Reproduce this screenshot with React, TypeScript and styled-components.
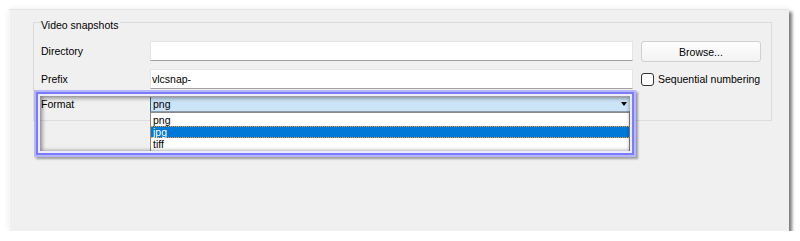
import styled, { createGlobalStyle } from 'styled-components';

const GlobalStyle = createGlobalStyle`
  body {
    margin: 0;
    background: #ffffff;
    font-family: "Liberation Sans", Arial, sans-serif;
    font-size: 10.5px;
    color: #000;
  }
`;

const Page = styled.div`
  padding: 9px 0 0 9px;
`;

const Panel = styled.div`
  position: relative;
  box-sizing: border-box;
  width: 780px;
  height: 222px;
  padding: 4px 0 0 24px;
  background: #f0f0f0;
  box-shadow: inset 0 1px 0 #e6e6e6, inset 1px 0 0 #fafafa,
    3px 3px 3px rgba(0, 0, 0, 0.5), 0 0 6px rgba(0, 0, 0, 0.08);
`;

const GroupBox = styled.fieldset`
  box-sizing: border-box;
  width: 739px;
  min-width: 0;
  margin: 0;
  padding: 10px 10px 8px 7px;
  border: 1px solid #dcdcdc;
`;

const Title = styled.legend`
  padding: 6px 2px 0 0;
  line-height: 12px;
  background: #f0f0f0;
`;

const Form = styled.div`
  display: grid;
  grid-template-columns: 101px 483px 120px;
  grid-template-rows: 20px 20px 15px;
  column-gap: 8px;
  row-gap: 8px;
`;

const Label = styled.div<{ $compact?: boolean }>`
  line-height: ${(p) => (p.$compact ? '14px' : '20px')};
`;

const TextField = styled.div`
  box-sizing: border-box;
  height: 20px;
  padding-left: 1px;
  line-height: 18px;
  background: #fff;
  border: 1px solid #e4e4e4;
  border-bottom-color: #a2a2a2;
`;

const Button = styled.button`
  box-sizing: border-box;
  height: 21px;
  padding: 0;
  font: inherit;
  color: #000;
  background: linear-gradient(#fdfdfd, #f3f3f3);
  border: 1px solid #d0d0d0;
  border-radius: 3px;
`;

const CheckRow = styled.label`
  display: flex;
  align-items: center;
  gap: 4px;
  line-height: 20px;
  white-space: nowrap;
`;

const Box = styled.span`
  box-sizing: border-box;
  width: 13px;
  height: 13px;
  background: #fff;
  border: 1px solid #333;
  border-radius: 3px;
`;

const Combo = styled.div`
  position: relative;
  box-sizing: border-box;
  width: 480px;
  height: 15px;
  padding-left: 2px;
  line-height: 14px;
  background: #cce4f7;
  border-left: 1px solid #2f6aa3;
  border-bottom: 1px solid #8a9aa8;
`;

const Arrow = styled.span`
  position: absolute;
  right: 3px;
  top: 5px;
  border-left: 3px solid transparent;
  border-right: 3px solid transparent;
  border-top: 4px solid #000;
`;

const Popup = styled.ul`
  position: absolute;
  top: 15px;
  left: -1px;
  z-index: 2;
  box-sizing: border-box;
  width: 480px;
  height: 42px;
  margin: 0;
  padding: 1px 0 0;
  list-style: none;
  background: #fff;
  border: 1px solid #8a8a8a;
`;

const Option = styled.li<{ $selected?: boolean }>`
  box-sizing: border-box;
  height: 12px;
  padding-left: 2px;
  line-height: 11px;
  background: ${(p) => (p.$selected ? '#0078d7' : 'transparent')};
  color: ${(p) => (p.$selected ? '#fff' : '#000')};
  border-top: 1px dotted ${(p) => (p.$selected ? '#f29a2e' : 'transparent')};
  border-bottom: 1px dotted ${(p) => (p.$selected ? '#f29a2e' : 'transparent')};
`;

const Highlight = styled.div`
  position: absolute;
  left: 25px;
  top: 81px;
  z-index: 3;
  box-sizing: border-box;
  width: 602px;
  height: 67px;
  pointer-events: none;
  border: 2px solid #b6b6fb;
  box-shadow: 2px 2px 2px rgba(0, 0, 0, 0.35), inset 0 0 0 2px #7b7bff,
    inset 0 0 0 4px #ececff, inset 1px 1px 4px 5px rgba(0, 0, 0, 0.45);
`;

const formats = ['png', 'jpg', 'tiff'];

export default function App() {
  return (
    <>
      <GlobalStyle />
      <Page>
        <Panel>
          <GroupBox>
            <Title>Video snapshots</Title>
            <Form>
              <Label>Directory</Label>
              <TextField />
              <Button>Browse...</Button>

              <Label>Prefix</Label>
              <TextField>vlcsnap-</TextField>
              <CheckRow>
                <Box />
                Sequential numbering
              </CheckRow>

              <Label $compact>Format</Label>
              <Combo>
                png
                <Arrow />
                <Popup>
                  {formats.map((f) => (
                    <Option key={f} $selected={f === 'jpg'}>
                      {f}
                    </Option>
                  ))}
                </Popup>
              </Combo>
            </Form>
          </GroupBox>
          <Highlight />
        </Panel>
      </Page>
    </>
  );
}
